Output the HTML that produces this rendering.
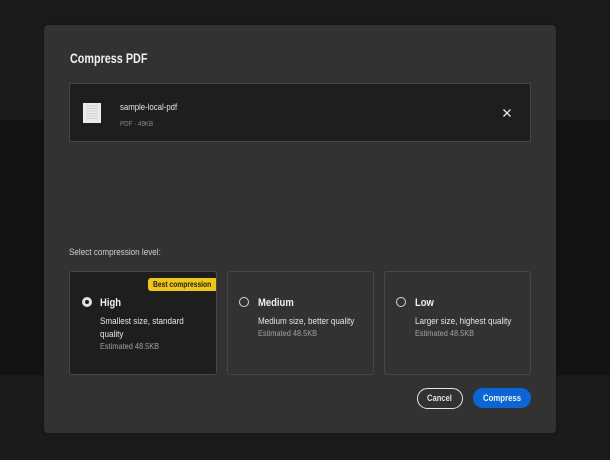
<!DOCTYPE html>
<html><head><meta charset="utf-8"><style>
html,body{margin:0;padding:0}
body{width:610px;height:460px;overflow:hidden;position:relative;background:#1a1a1a;font-family:"Liberation Sans",sans-serif;color:#e8e8e8}
div{position:absolute;box-sizing:border-box;white-space:nowrap}
.band{left:0;width:610px;top:120px;height:255px;background:#131313}
.modal{left:44px;top:25px;width:512px;height:408px;background:#323232;border-radius:4px;box-shadow:0 0 3px rgba(0,0,0,.35)}
.abs{line-height:14px;transform-origin:0 50%;filter:blur(.25px)}
.card{top:271px;height:104px;border:1px solid #474747;border-radius:3px}
.t{font-size:11px;font-weight:bold;color:#f0f0f0;transform:scaleX(.86)}
.d{font-size:9px;color:#e6e6e6;line-height:14px;transform:scaleX(.9)}
.e{font-size:8.3px;color:#a0a0a0;transform:scaleX(.89)}
.r{width:10px;height:10px;border:1.5px solid #d8d8d8;border-radius:50%;top:297px}
</style></head><body>
<div class="band"></div>
<div class="modal"></div>
<div class="abs" style="left:69.500px;top:52px;font-size:13.500px;font-weight:bold;color:#efefef;transform:scaleX(.8)">Compress PDF</div>
<div style="left:69px;top:83px;width:462px;height:59px;background:#1e1e1e;border:1px solid #474747;border-radius:2px"></div>
<svg style="position:absolute;left:83px;top:103px" width="18" height="20" viewBox="0 0 18 20"><rect width="18" height="20" fill="#ececec"/><path d="M3 3h12M3 5.500h12M3 8h12M3 10.500h12M3 13h12M3 15.500h12" stroke="#d0d0d0" stroke-width="1"/></svg>
<div class="abs" style="left:120px;top:101px;font-size:9.500px;color:#e4e4e4;transform:scaleX(.82)">sample-local-pdf</div>
<div class="abs" style="left:120px;top:116.500px;font-size:7.500px;color:#8a8a8a;transform:scaleX(.83)">PDF · 49KB</div>
<svg style="position:absolute;left:503px;top:109px" width="8" height="8" viewBox="0 0 8 8"><path d="M.5.5l7 7M7.500.5l-7 7" stroke="#ececec" stroke-width="1.300"/></svg>
<div class="abs" style="left:69px;top:245px;font-size:9px;color:#d0d0d0;transform:scaleX(.9)">Select compression level:</div>

<div class="card" style="left:69px;width:148px;background:#1e1e1e"></div>
<div style="left:148px;top:278px;width:68px;height:13px;background:#f0c80f;border-radius:3px 0 0 3px"></div>
<div class="abs" style="left:153px;top:278px;color:#1a1a1a;font-size:8px;font-weight:bold;line-height:13px;transform:scaleX(.84)">Best compression</div>
<div class="r" style="left:82px;background:#1e1e1e;border-color:#e0e0e0;border-width:3px"></div>
<div class="abs t" style="left:100px;top:295.500px">High</div>
<div class="abs d" style="left:100px;top:314px">Smallest size, standard</div>
<div class="abs d" style="left:100px;top:327px">quality</div>
<div class="abs e" style="left:100px;top:339px">Estimated 48.5KB</div>

<div class="card" style="left:227px;width:147px"></div>
<div class="r" style="left:239px"></div>
<div class="abs t" style="left:258px;top:295.500px">Medium</div>
<div class="abs d" style="left:258px;top:314px">Medium size, better quality</div>
<div class="abs e" style="left:258px;top:326px">Estimated 48.5KB</div>

<div class="card" style="left:384px;width:147px"></div>
<div class="r" style="left:396px"></div>
<div class="abs t" style="left:415px;top:295.500px">Low</div>
<div class="abs d" style="left:415px;top:314px">Larger size, highest quality</div>
<div class="abs e" style="left:415px;top:326px">Estimated 48.5KB</div>

<div style="left:416.500px;top:387.500px;width:46.500px;height:21px;border:1.500px solid #e6e6e6;border-radius:11px"></div>
<div class="abs" style="left:427px;top:392px;font-size:9.500px;font-weight:bold;color:#e0e0e0;transform:scaleX(.8)">Cancel</div>
<div style="left:473px;top:388px;width:58px;height:20px;background:#0a66d8;border-radius:10px"></div>
<div class="abs" style="left:483px;top:392px;font-size:9.500px;font-weight:bold;color:#f2f6ff;transform:scaleX(.82)">Compress</div>
</body></html>
